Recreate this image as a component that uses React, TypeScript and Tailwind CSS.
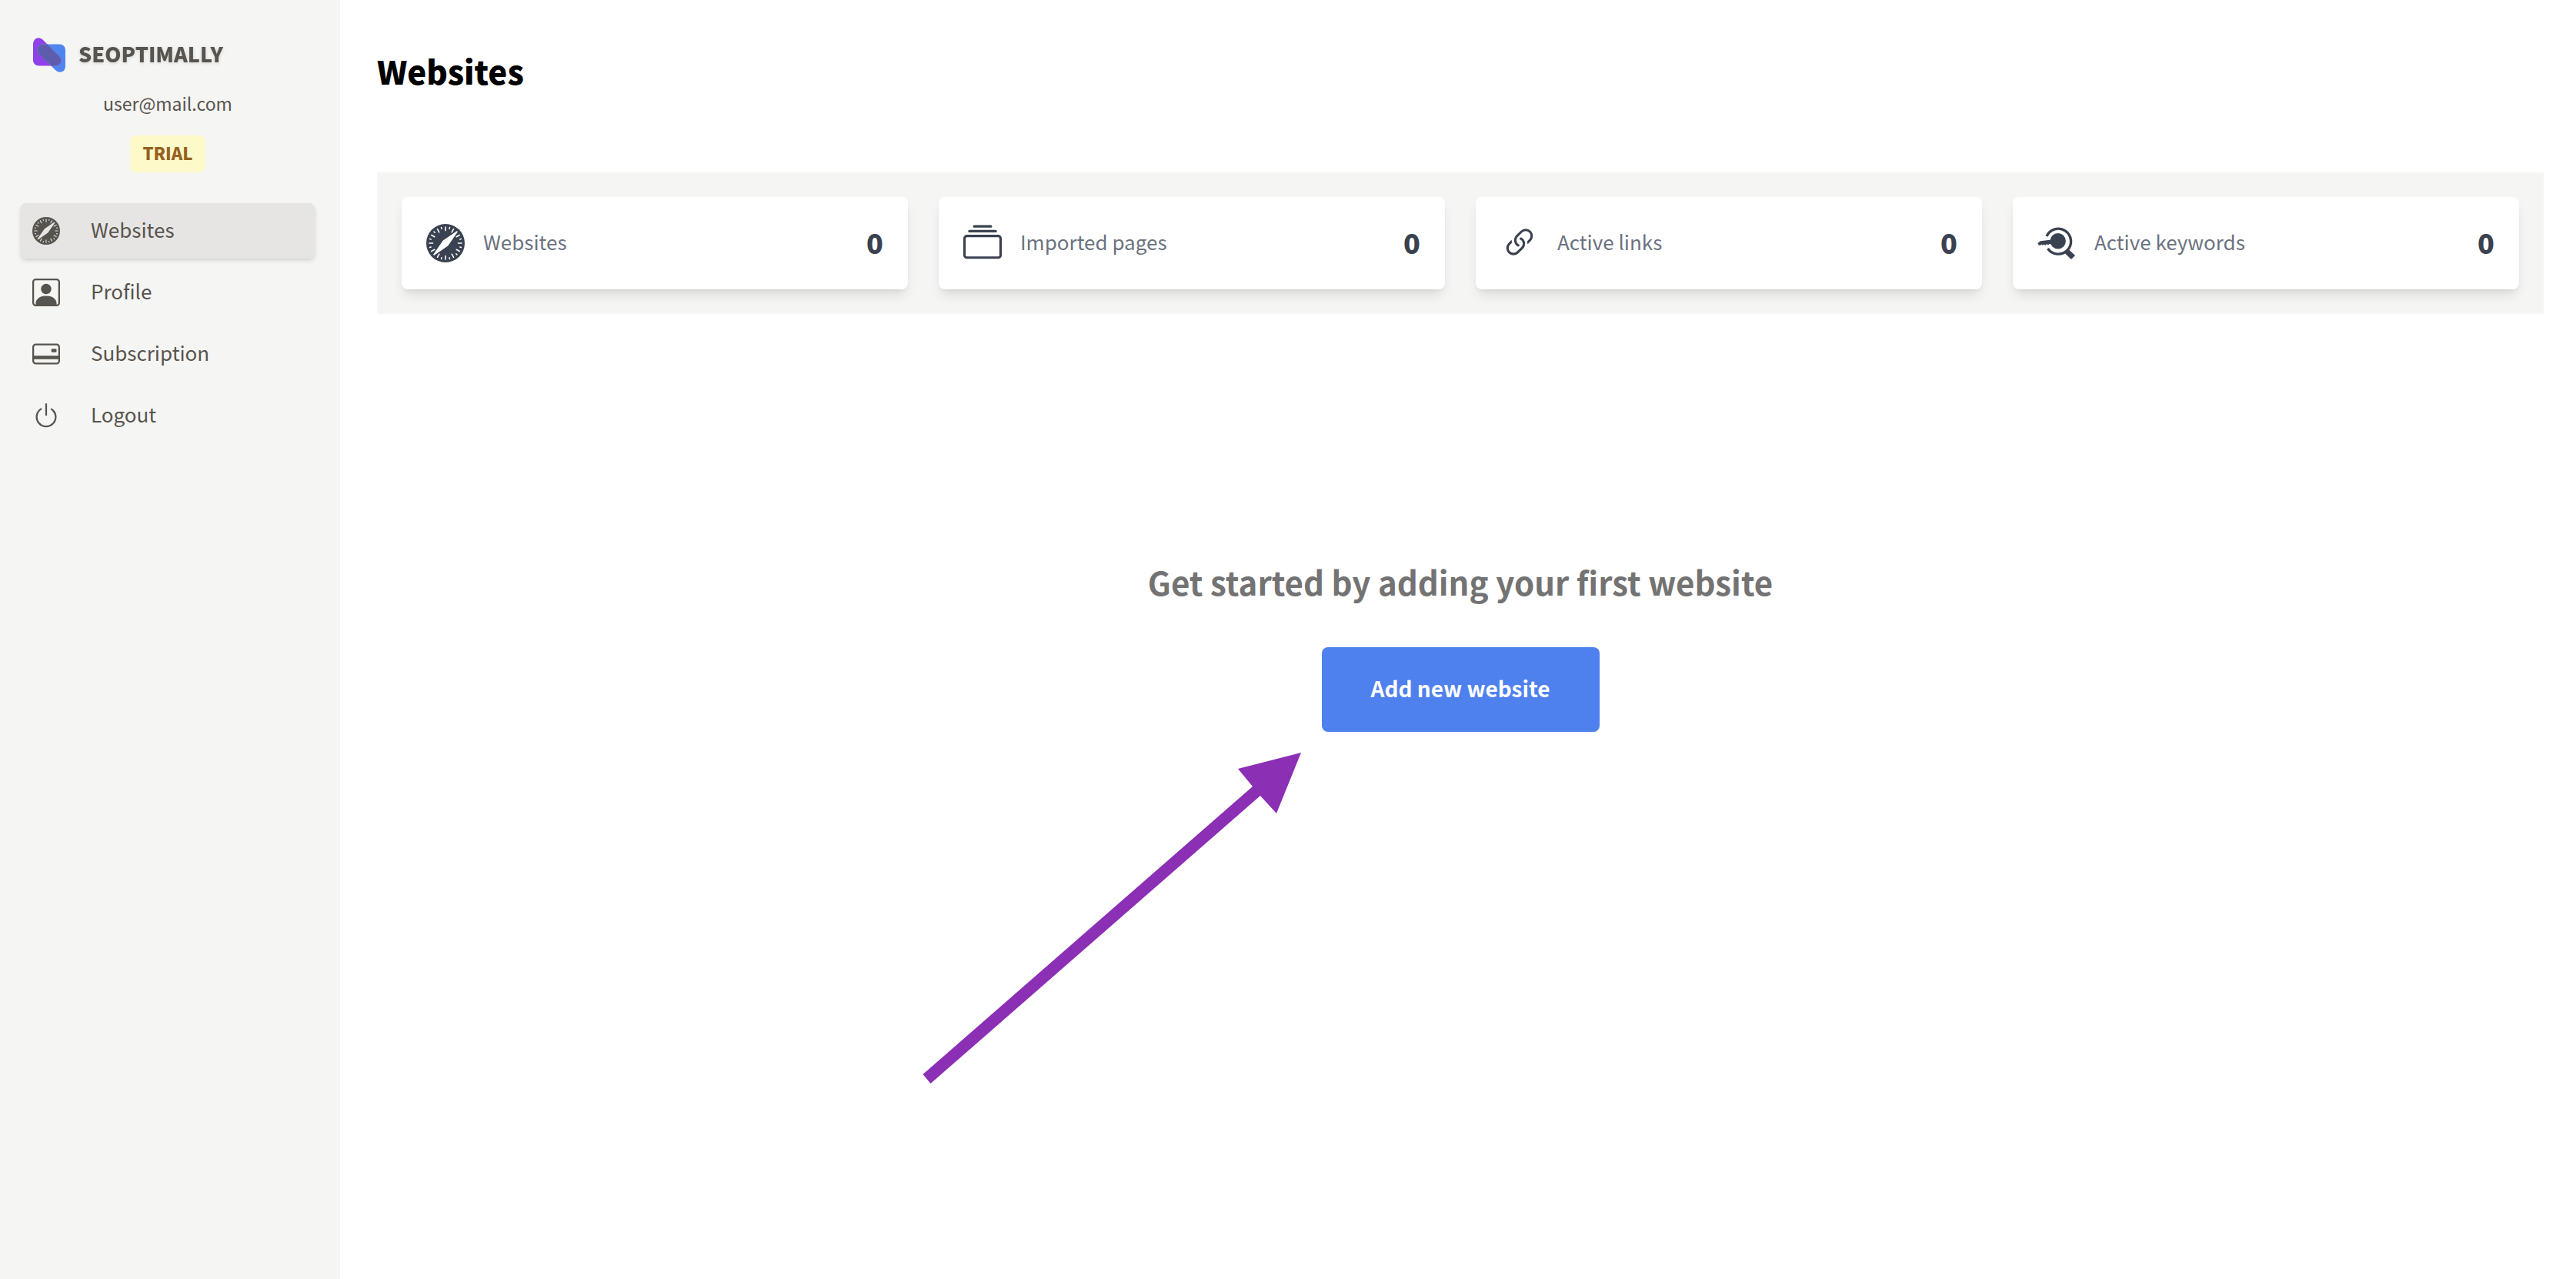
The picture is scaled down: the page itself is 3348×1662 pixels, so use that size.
import { BsBrowserSafari, BsPersonSquare, BsCreditCard2Back, BsPower, BsCollection, BsLink45Deg } from "react-icons/bs";
import type { ReactNode } from "react";

function Logo() {
  return (
    <svg viewBox="0 0 44 48" className="h-12 w-11" aria-hidden="true">
      <path d="M1 10C1 1 9 -1 14 4L35 25C41 31 36 37.500 30 37.500H9C4 37.500 1 34.500 1 30Z" fill="#9040e8" />
      <path d="M14 9.500H35C40 9.500 43 13 43 17V38C43 46 35 48 30 43L9 23C4 17 7 9.500 14 9.500Z" fill="#5085f0" />
      <path d="M14 9.500H19.500L35 25C41 31 36 37.500 30 37.500H24.500L9 23C4 17 7 9.500 14 9.500Z" fill="#5d5cad" stroke="#7a78c4" strokeWidth=".6" />
    </svg>
  );
}

function KeywordIcon() {
  return (
    <svg viewBox="0 0 50 50" className="size-[50px]" aria-hidden="true" fill="currentColor">
      <path d="M12 16A16.500 16.500 0 1 1 13.500 32" fill="none" stroke="currentColor" strokeWidth="3.400" />
      <circle cx="26.700" cy="22.300" r="10.200" />
      <path d="M18 20.500L4 22.300L0.300 25L2 27.700H4L5.500 26.500L7 28L8.500 26.500L10.500 28L12 26L14 27.500L15.500 26L19 26.500Z" />
      <path d="M36 38.500L41 33.500L49 41L44 46Z" />
    </svg>
  );
}

const nav: { label: string; icon: ReactNode; active?: boolean }[] = [
  { label: "Websites", icon: <BsBrowserSafari />, active: true },
  { label: "Profile", icon: <BsPersonSquare /> },
  { label: "Subscription", icon: <BsCreditCard2Back /> },
  { label: "Logout", icon: <BsPower /> },
];

const stats: { label: string; icon: ReactNode }[] = [
  { label: "Websites", icon: <BsBrowserSafari /> },
  { label: "Imported pages", icon: <BsCollection /> },
  { label: "Active links", icon: <BsLink45Deg /> },
  { label: "Active keywords", icon: <KeywordIcon /> },
];

export default function App() {
  return (
    <div className="flex min-h-screen bg-white font-['Noto_Sans_CJK_JP','Noto_Sans_CJK_SC',sans-serif]">
      <aside className="w-[442px] shrink-0 bg-[#f5f5f3] px-[26px] pt-12 text-[#57534e]">
        <div className="flex items-center gap-4 pl-4">
          <Logo />
          <span className="pb-1 text-[27px] leading-11 font-black drop-shadow-sm">SEOPTIMALLY</span>
        </div>
        <div className="mr-1.5 flex flex-col items-center pt-5">
          <span className="text-[23px] leading-9">user@mail.com</span>
          <span className="mt-6 rounded-lg bg-[#fef9c9] px-4 pb-1 text-[22px] leading-11 font-black text-[#95611f]">TRIAL</span>
        </div>
        <nav className="mt-10 mr-1.5 flex flex-col gap-2">
          {nav.map((item) => (
            <a
              key={item.label}
              href="#"
              className={
                item.active
                  ? "flex h-[72px] items-center gap-10 rounded-lg bg-[#e6e5e3] px-4 shadow-md"
                  : "flex h-[72px] items-center gap-10 rounded-lg px-4"
              }
            >
              <span className="text-4xl">{item.icon}</span>
              <span className="pb-1 text-[26px] leading-10">{item.label}</span>
            </a>
          ))}
        </nav>
      </aside>
      <main className="min-w-0 flex-1 pr-[42px] pl-12">
        <h1 className="pt-15 text-[42px] leading-16 font-black text-black">Websites</h1>
        <section className="mt-25 grid grid-cols-4 gap-10 bg-[#f5f5f3] p-8">
          {stats.map((s) => (
            <div key={s.label} className="flex h-[120px] items-center rounded-lg bg-white px-8 text-[#3a4150] shadow-lg">
              <span className="text-[50px]">{s.icon}</span>
              <span className="ml-6 pb-1 text-[26px] leading-10 text-[#6b7280]">{s.label}</span>
              <span className="ml-auto pb-1 text-4xl font-black">0</span>
            </div>
          ))}
        </section>
        <section className="mt-79 flex flex-col items-center">
          <h2 className="text-[42px] leading-16 font-bold text-[#737373]">Get started by adding your first website</h2>
          <div className="relative mt-[53px]">
            <button type="button" className="h-[110px] rounded-lg bg-[#4f81ee] px-16 pb-1 text-[28px] font-bold text-white">
              Add new website
            </button>
            <svg viewBox="0 0 494 432" className="pointer-events-none absolute top-[136px] right-[386px] h-[432px] w-[494px]" aria-hidden="true">
              <path d="M492 1L410 22L429 45L0.500 419L10.500 431L439 57L460 80Z" fill="#8b2fb5" />
            </svg>
          </div>
        </section>
      </main>
    </div>
  );
}
